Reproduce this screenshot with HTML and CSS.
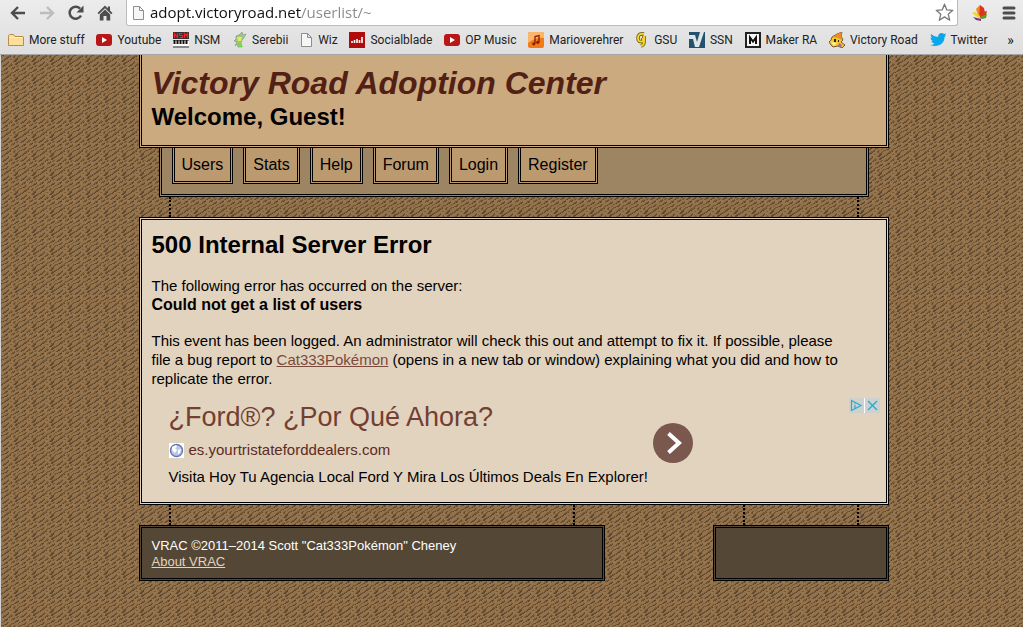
FILE: index.html
```html
<!DOCTYPE html>
<html lang="en">
<head>
  <meta charset="UTF-8">
  <meta name="viewport" content="width=device-width, initial-scale=1.0">
  <title>Victory Road Adoption Center</title>
  <link rel="stylesheet" href="styles.css">
</head>
<body>

<div class="browser">
  <div class="toolbar">
    <div class="toolbar-buttons">
      <button class="tool" aria-label="Back">
        <svg width="16" height="16" viewBox="0 0 16 16" fill="none" stroke="#4d4d4d" stroke-width="2.4"><path d="M15 8H2.5M8 2L2 8l6 6"/></svg>
      </button>
      <button class="tool" aria-label="Forward">
        <svg width="16" height="16" viewBox="0 0 16 16" fill="none" stroke="#bdbdbd" stroke-width="2.4"><path d="M1 8h12.5M8 2l6 6-6 6"/></svg>
      </button>
      <button class="tool" aria-label="Reload">
        <svg width="16" height="16" viewBox="0 0 16 16"><path d="M13 10.5A6 6 0 1 1 12 3.6" fill="none" stroke="#4d4d4d" stroke-width="2.5"/><path d="M15.5.5V7.500H8.500z" fill="#4d4d4d"/></svg>
      </button>
      <button class="tool" aria-label="Home">
        <svg width="16" height="16" viewBox="0 0 16 16" fill="#4d4d4d"><path d="M8 .5L.5 8l1.300 1.200L8 3.300l6.200 5.900L15.500 8 13 5.500V1.500h-2.200v2z"/><path d="M8 4.500L2.800 9.500V15.500h3.700v-4.500h3v4.500h3.700V9.500z"/></svg>
      </button>
    </div>
    <div class="address">
      <svg width="13" height="16" viewBox="0 0 13 16" fill="#f6f6f6" stroke="#8e8e8e"><path d="M1.500 1.500h6l4 4v9h-10zM7.500 1.500v4h4"/></svg>
      <input class="url" type="text" aria-label="Address" value="adopt.victoryroad.net/userlist/~">
      <button class="tool" aria-label="Bookmark this page">
        <svg width="19" height="19" viewBox="0 0 19 19" fill="#fff" stroke="#777" stroke-width="1.300" stroke-linejoin="round"><path d="M9.500 1.200l2.300 5.700 6 .4-4.600 3.900 1.500 6-5.200-3.300-5.200 3.300 1.500-6L1.200 7.300l6-.4z"/></svg>
      </button>
    </div>
    <button class="tool" aria-label="Extension">
      <svg width="18" height="18" viewBox="0 0 18 18"><path d="M8 14L5 5l4-4 2 6z" fill="#f08a1b"/><path d="M8 14L9 1l4 3 1 5z" fill="#e2321b"/><path d="M8 14l4-6 4-1-1 4z" fill="#c9411b"/><path d="M8 14l8-4-1 4-4 1z" fill="#5c9a22"/><path d="M9 15L1 9l3-1 5 4z" fill="#f3d519"/><path d="M10 15l-8-2 3 3 5 1z" fill="#853084"/></svg>
    </button>
    <button class="tool" aria-label="Menu">
      <svg width="14" height="14" viewBox="0 0 14 14" stroke="#4d4d4d" stroke-width="3" stroke-linecap="round"><path d="M2 2h10M2 7h10M2 12h10"/></svg>
    </button>
  </div>

  <nav class="bookmarks" aria-label="Bookmarks">
    <a class="bookmark" href="#">
      <svg width="16" height="16" viewBox="0 0 16 16" fill="#fbdf98" stroke="#bd8b45"><path d="M.5 13.500v-10l1-1h4l1.500 2h8l.5.5v8.500z"/><path d="M1.500 5.500h13" stroke="#fff1c7"/></svg>
      More stuff</a>
    <a class="bookmark" href="#">
      <svg width="16" height="16" viewBox="0 0 16 16"><rect y="2" width="16" height="12" rx="3" fill="#b91717"/><path d="M6 5v6l5-3z" fill="#fff"/></svg>
      Youtube</a>
    <a class="bookmark" href="#">
      <svg width="16" height="16" viewBox="0 0 16 16"><path d="M0 0h16v7H0z" fill="#3a3032"/><path d="M1.500 6V1.500l3 4V1M9.500 1.500h-3v2h3v2h-3M11.500 6V1.500l1.500 2 1.500-2V6" fill="none" stroke="#e22" stroke-width="1.200"/><path d="M0 8h16v8H0z" fill="#888"/><path d="M0 9h16v5H0z" fill="#fff"/><path d="M1.500 8v4M4.500 8v4M7.500 8v4M10.500 8v4M13.500 8v4" stroke="#111" stroke-width="2"/></svg>
      NSM</a>
    <a class="bookmark" href="#">
      <svg width="15" height="16" viewBox="0 0 15 16"><path d="M4 4l3-1 3-3 1 3 3-1-2 4-2 2-1 3 1 4H6l-1-3-2 2 2-4-3-1 2-2z" fill="#9cc489" stroke="#7d9378" stroke-width=".6"/><path d="M5 5l5 0-1 4-3 0z" fill="#eee94f"/><path d="M6 11h2l3 4H7z" fill="#77dc43"/><path d="M11 2l2 2-2 2z" fill="#a7b9ba"/></svg>
      Serebii</a>
    <a class="bookmark" href="#">
      <svg width="13" height="16" viewBox="0 0 13 16" fill="#f6f6f6" stroke="#8e8e8e"><path d="M1.500 1.500h6l4 4v9h-10zM7.500 1.500v4h4"/></svg>
      Wiz</a>
    <a class="bookmark" href="#">
      <svg width="16" height="16" viewBox="0 0 16 16"><path d="M0 0h16v16H0z" fill="#b00c0c"/><path d="M3 11V9M5.500 11V8M8 11V7M10.500 11V8M13 11V5" stroke="#fff" stroke-width="1.600"/></svg>
      Socialblade</a>
    <a class="bookmark" href="#">
      <svg width="16" height="16" viewBox="0 0 16 16"><rect y="2" width="16" height="12" rx="3" fill="#b91717"/><path d="M6 5v6l5-3z" fill="#fff"/></svg>
      OP Music</a>
    <a class="bookmark" href="#">
      <svg width="16" height="16" viewBox="0 0 16 16"><rect width="16" height="16" rx="2" fill="#f47a16"/><path d="M0 2q0-2 2-2h12q2 0 2 2v4Q8 5 0 11z" fill="#fbb66b"/><path d="M7 11.500V4.500l4-1v6.500" fill="none" stroke="#8b2108" stroke-width="1.300"/><circle cx="5.800" cy="11.800" r="1.600" fill="#8b2108"/><circle cx="9.800" cy="10.300" r="1.600" fill="#8b2108"/></svg>
      Marioverehrer</a>
    <a class="bookmark" href="#">
      <svg width="14" height="16" viewBox="0 0 14 16" fill="none"><path d="M9 2Q3 1 3 6t5 3V6M9 4v6q0 3-3 4" stroke="#6d5b12" stroke-width="3.600"/><path d="M9 2Q3 1 3 6t5 3V6M9 4v6q0 3-3 4" stroke="#f1d32b" stroke-width="2"/></svg>
      GSU</a>
    <a class="bookmark" href="#">
      <svg width="16" height="16" viewBox="0 0 16 16"><path d="M0 0h16v16H0z" fill="#23536c"/><path d="M0 3h6l2 7 3-10h4l-5 15H6L4 7H0z" fill="#dce5e9"/></svg>
      SSN</a>
    <a class="bookmark" href="#">
      <svg width="16" height="16" viewBox="0 0 16 16"><path d="M0 0h16v16H0z" fill="#222"/><path d="M2 2h12v12H2z" fill="#f7f7f7"/><path d="M5 12V5.500l3 4 3-4V12" fill="none" stroke="#111" stroke-width="2"/></svg>
      Maker RA</a>
    <a class="bookmark" href="#">
      <svg width="16" height="16" viewBox="0 0 16 16"><path d="M3 5l5-3 5-2-1 4 2 4-2 2 4 3-3 3-4-2-5 1-2-2-2-3 2-2z" fill="#f2c62e" stroke="#593e1e" stroke-width=".8"/><path d="M4 5l4-3 5-2-1 4 1 4-4-2z" fill="#ed8b24"/><path d="M2 10l6 1-3 3z" fill="#fff19a"/><path d="M5 7h2v3H5zM9 8h1v2H9z" fill="#222"/><path d="M10 11l3 2-1 2-3-1z" fill="#9b6da8"/></svg>
      Victory Road</a>
    <a class="bookmark" href="#">
      <svg width="16" height="16" viewBox="0 0 16 16"><path d="M1 2q3 3 7 3c0-4 4-5 6-3l2-.5-1 2h1l-1.500 1.500C14.500 12 8 16 0 13q3 0 4.500-1.500Q2 11 1.500 9H3Q.5 8 .5 5.500L2 6Q0 4 1 2z" fill="#0aa7ea"/></svg>
      Twitter</a>
    <a class="bookmark more" href="#" aria-label="More bookmarks">»</a>
  </nav>
</div>

<div class="page">
  <div class="wrapper">
    <header class="header">
      <h1 class="site-title">Victory Road Adoption Center</h1>
      <p class="welcome">Welcome, Guest!</p>
    </header>

    <nav class="menu">
      <a class="menu-item" href="#">Users</a>
      <a class="menu-item" href="#">Stats</a>
      <a class="menu-item" href="#">Help</a>
      <a class="menu-item" href="#">Forum</a>
      <a class="menu-item" href="#">Login</a>
      <a class="menu-item" href="#">Register</a>
    </nav>

    <div class="ropes"></div>

    <main class="content">
      <h2 class="error-title">500 Internal Server Error</h2>
      <p>The following error has occurred on the server:<br><b class="error-name">Could not get a list of users</b></p>
      <p>This event has been logged. An administrator will check this out and attempt to fix it. If possible, please<br>
      file a bug report to <a class="link" href="#">Cat333Pokémon</a> (opens in a new tab or window) explaining what you did and how to<br>
      replicate the error.</p>

      <aside class="ad" lang="es">
        <div class="ad-text">
          <a class="ad-title" href="#">¿Ford®? ¿Por Qué Ahora?</a>
          <a class="ad-url" href="#">
            <svg width="15" height="15" viewBox="0 0 15 15"><path d="M0 0h15v15H0z" fill="#fff"/><circle cx="7.500" cy="7.500" r="6" fill="#b9c8e8" stroke="#6475b4" stroke-width="1.400"/><path d="M3 4l4-2 1 2-2 1 2 2-2 3-3-3zM9 7l3-1-1 4-2 1z" fill="#fff"/></svg>
            es.yourtristateforddealers.com</a>
          <div class="ad-line">Visita Hoy Tu Agencia Local Ford Y Mira Los Últimos Deals En Explorer!</div>
        </div>
        <a class="ad-arrow" href="#" aria-label="Open ad">
          <svg width="40" height="40" viewBox="0 0 40 40"><circle cx="20" cy="20" r="20" fill="#7b584d"/><path d="M15.500 10.500L26 20l-10.500 9.500" fill="none" stroke="#fff" stroke-width="4"/></svg>
        </a>
        <div class="ad-choices">
          <button class="ad-button" aria-label="Ad choices">
            <svg width="15" height="15" viewBox="0 0 15 15" fill="none" stroke="#1fb0cf" stroke-width="1.200"><path d="M2.500 2.500v10l9.500-5z"/><path d="M6 5.200v1M6 7.200v3"/></svg>
          </button>
          <button class="ad-button" aria-label="Close ad">
            <svg width="15" height="15" viewBox="0 0 15 15" fill="none" stroke="#1fb0cf" stroke-width="1.400"><path d="M3 3l9 9M12 3l-9 9"/></svg>
          </button>
        </div>
      </aside>
    </main>

    <footer class="footer">
      <div>
        <div class="ropes"></div>
        <div class="footer-box">VRAC ©2011–2014 Scott "Cat333Pokémon" Cheney<br><a class="footer-link" href="#">About VRAC</a></div>
      </div>
      <div>
        <div class="ropes"></div>
        <div class="footer-box"></div>
      </div>
    </footer>
  </div>
</div>

</body>
</html>
```
FILE: styles.css
```css
* {
  box-sizing: border-box;
}

body {
  margin: 0;
  min-height: 100vh;
  display: flex;
  flex-direction: column;
  font-family: "Liberation Sans", Arial, sans-serif;
  font-size: 16px;
  line-height: 19px;
  color: #000;
}

p {
  margin: 0 0 17px;
}

button {
  border: 0;
  padding: 0;
  background: none;
  cursor: pointer;
}

svg {
  display: block;
  flex: none;
}

/* Browser bar */
.browser {
  background: linear-gradient(#ececec, #dedede);
  border-bottom: 1px solid #a5a5a5;
}

.toolbar {
  display: flex;
  align-items: center;
  height: 26px;
  gap: 13px;
  padding: 0 7px 0 10px;
}

.toolbar-buttons {
  display: flex;
  gap: 13px;
}

.address {
  flex: 1;
  display: flex;
  align-items: center;
  height: 26px;
  padding: 0 3px 0 5px;
  background: #fff;
  border: 1px solid #bcbcbc;
  border-top: 0;
  border-radius: 0 0 3px 3px;
}

.url {
  flex: 1;
  min-width: 0;
  border: 0;
  outline: 0;
  padding: 0 0 2px 5px;
  font: 15px/22px "Open Sans", "Noto Sans", sans-serif;
  color: transparent;
  background: linear-gradient(to right, #111 156px, #888 156px);
  -webkit-background-clip: text;
  background-clip: text;
}

.bookmarks {
  display: flex;
  justify-content: space-between;
  height: 28px;
  padding: 0 9px 0 8px;
  font-family: Roboto, "Open Sans", sans-serif;
  font-size: 12px;
}

.bookmark {
  display: flex;
  align-items: center;
  gap: 5px;
  color: #222;
  text-decoration: none;
  white-space: nowrap;
}

.more {
  padding-left: 8px;
  font-size: 14px;
}

/* Page */
.page {
  flex: 1;
  border-left: 1px solid #d4d4d4;
  padding: 0 10px 20px 13px;
  background-color: #94724b;
  background-image: url("data:image/svg+xml,%3Csvg xmlns='http://www.w3.org/2000/svg' width='18' height='19' shape-rendering='crispEdges' fill='none'%3E%3Cpath stroke='%23755a39' d='M0 .5h3M8 .5h2M13 .5h2M0 1.500h1M6 1.500h4M12 1.500h2M17 1.500h1M5 2.500h3M11 2.500h3M16 2.500h2M4 3.500h3M14 3.500h3M3 4.500h2M9 4.500h2M14 4.500h2M1 5.500h3M8 5.500h3M13 5.500h2M0 6.500h2M7 6.500h3M12 6.500h2M17 6.500h1M0 7.500h1M6 7.500h2M15 7.500h3M5 8.500h2M10 8.500h1M14 8.500h3M3 9.500h3M9 9.500h3M14 9.500h1M2 10.500h3M8 10.500h3M16 10.500h2M1 11.500h2M7 11.500h2M13 11.500h1M15 11.500h2M0 12.500h1M6 12.500h2M11 12.500h3M4 13.500h3M10 13.500h3M17 13.500h1M3 14.500h3M9 14.500h2M15 14.500h3M2 15.500h2M14 15.500h3M0 16.500h2M6 16.500h2M13 16.500h2M5 17.500h2M10 17.500h3M17 17.500h1M3 18.500h3M9 18.500h2M16 18.500h1'/%3E%3Cpath stroke='%235b4730' d='M2 .5h1M9 1.500h1M13 1.500h1M7 2.500h1M5 3.500h2M16 3.500h1M4 4.500h1M15 4.500h2M3 5.500h1M10 5.500h1M14 5.500h2M1 6.500h1M9 6.500h1M13 6.500h2M7 7.500h1M17 7.500h1M6 8.500h1M15 8.500h2M5 9.500h1M14 9.500h2M3 10.500h2M10 10.500h1M2 11.500h1M8 11.500h1M13 12.500h1M5 13.500h2M12 13.500h1M5 14.500h1M17 14.500h1M3 15.500h1M15 15.500h2M14 16.500h1M6 17.500h1M12 17.500h1M4 18.500h2'/%3E%3Cpath fill='%2397764e' d='M8 5h3v2H8zM7 12h3v3H7zM10 1h2v3h-2zM0 12h3v3H0z'/%3E%3C/svg%3E");
}

.wrapper {
  max-width: 750px;
  margin: 0 auto;
}

.header,
.menu,
.menu-item,
.content,
.footer-box {
  border: 3px double #000;
}

.header {
  border-top: 0;
  padding: 10px 10px 13px;
  background-color: #cbaa80;
}

.site-title {
  margin: 0;
  font-size: 32px;
  font-style: italic;
  line-height: 37px;
  color: #522015;
}

.welcome {
  margin: 0;
  font-size: 24px;
  font-weight: bold;
  line-height: 30px;
}

.menu {
  display: flex;
  flex-wrap: wrap;
  gap: 10px;
  margin: 0 20px;
  border-top: 0;
  padding: 0 10px 10px;
  background-color: #9d8463;
}

.menu-item {
  border-top: 0;
  padding: 7px;
  background-color: #bc9a70;
  color: #000;
  text-decoration: none;
}

.ropes {
  height: 20px;
  margin: 0 30px;
  border: 0 dotted #000;
  border-width: 0 2px;
}

.content {
  padding: 10px;
  background-color: #e2d3bf;
  font-size: 15px;
}

.error-title {
  margin: 0 0 16px;
  font-size: 24px;
  line-height: 30px;
}

.error-name {
  font-size: 16px;
}

.link {
  color: #7a4a3c;
}

/* Ad */
.ad {
  display: flex;
  min-height: 94px;
  margin: -7px -4px 0 0;
}

.ad-text {
  padding-left: 17px;
}

.ad-title {
  display: block;
  font-size: 27px;
  line-height: 38px;
  color: #733f31;
  text-decoration: none;
}

.ad-url {
  display: flex;
  align-items: center;
  gap: 5px;
  line-height: 28px;
  color: #5c2c1f;
  text-decoration: none;
}

.ad-line {
  line-height: 26px;
}

.ad-arrow {
  margin: 25px 0 0 5px;
}

.ad-choices {
  display: flex;
  align-self: flex-start;
  gap: 1px;
  margin-left: auto;
  background-color: #fff;
}

.ad-button {
  background-color: #d0d0d0;
}

/* Footer */
.footer {
  display: grid;
  grid-template-columns: 466fr 176fr;
  gap: 108px;
}

.footer-box {
  min-height: 56px;
  padding: 10px 10px 8px;
  background-color: #544735;
  color: #fff;
  font-size: 13px;
  line-height: 16px;
}

.footer-link {
  color: #e2d3bf;
}
```
